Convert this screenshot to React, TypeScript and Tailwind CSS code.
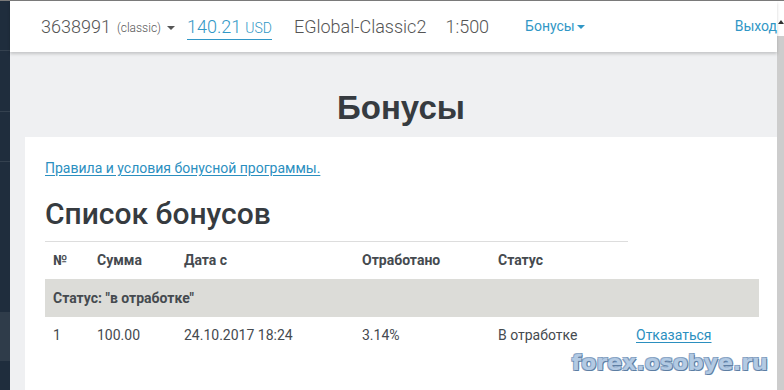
import React from "react";

const Caret = ({ className = "" }: { className?: string }) => (
  <span
    className={`inline-block w-0 h-0 border-l-[4px] border-r-[4px] border-t-[4px] border-l-transparent border-r-transparent ${className}`}
  />
);

export default function App() {
  const cols = "grid grid-cols-[52px_87px_178px_136px_138px_1fr]";
  return (
    <div className="w-[784px] h-[390px] overflow-hidden flex bg-[#eff0f2] font-['Roboto',sans-serif] border-t border-[#7a7a7a]">
      {/* sidebar */}
      <div className="w-[10px] shrink-0 bg-[#1f2d3d] flex flex-col">
        <div className="h-[50px] border-b border-[#34414f]" />
        <div className="h-[61px] border-b border-[#34414f]" />
        <div className="h-[50px] border-b border-[#34414f]" />
        <div className="h-[150px]" />
        <div className="h-[49px] bg-[#2f3c4a]" />
      </div>

      {/* main */}
      <div className="flex-1 flex flex-col min-w-0">
        <div className="h-[51px] bg-white shadow-[0_2px_3px_rgba(0,0,0,0.18)] flex items-center pl-[31px] text-[#555] relative z-10 shrink-0">
          <span className="text-[18px] font-light">3638991</span>
          <span className="text-[12px] font-light ml-[6px] mt-[3px]">(classic)</span>
          <Caret className="ml-[6px] border-t-[#555] mt-[2px]" />
          <span className="ml-[12px] border-b border-[#3197c6] text-[#3197c6] leading-[22px] mt-[2px]">
            <span className="text-[18px] font-light">140.21</span>
            <span className="text-[14px] font-light ml-[4px]">USD</span>
          </span>
          <span className="ml-[22px] text-[18px] font-light">EGlobal-Classic2</span>
          <span className="ml-[19px] text-[18px] font-light">1:500</span>
          <span className="ml-[36px] text-[14px] text-[#3197c6] flex items-center">
            Бонусы
            <Caret className="ml-[2px] border-t-[#3197c6]" />
          </span>
          <span className="ml-auto text-[14px] text-[#3197c6]">Выход</span>
        </div>

        <div className="flex-1 flex flex-col pt-[37px] min-h-0">
          <h1 className="text-center font-['Liberation_Sans',Arial,sans-serif] font-bold text-[33px] leading-[38px] text-[#363b40] h-[48px] pl-[15px]">
            Бонусы
          </h1>
          <div className="flex-1 bg-white ml-[15px] px-[20px] pt-[19px]">
            <a className="text-[14px] text-[#2b8fbf] underline underline-offset-2 leading-[20px]">
              Правила и условия бонусной программы.
            </a>
            <h2 className="text-[30px] font-medium text-[#363b40] mt-[14px] leading-[40px]">
              Список бонусов
            </h2>
            <div className="w-[583px] border-t border-[#dddddd] mt-[7px]" />
            <div className="w-[714px] text-[14px] text-[#454a4f]">
              <div className={`${cols} h-[37px] items-center font-bold`}>
                <div className="pl-[8px]">№</div>
                <div>Сумма</div>
                <div>Дата с</div>
                <div>Отработано</div>
                <div>Статус</div>
                <div />
              </div>
              <div className="h-[38px] bg-[#dcdcd8] flex items-center pl-[8px] font-bold">
                Статус: "в отработке"
              </div>
              <div className={`${cols} h-[36px] items-center`}>
                <div className="pl-[8px]">1</div>
                <div>100.00</div>
                <div>24.10.2017 18:24</div>
                <div>3.14%</div>
                <div>В отработке</div>
                <div>
                  <a className="text-[#2b8fbf] underline underline-offset-2">Отказаться</a>
                </div>
              </div>
            </div>
            <div className="w-[714px] flex justify-end">
              <span className="text-[22px] font-bold font-['DejaVu_Sans',Verdana,sans-serif] text-[#b3cae3] leading-[24px] mr-[-9px] mt-[-2px] [text-shadow:1px_1px_0_#5d7ea3,-1px_-1px_0_#8ea9c8,1px_-1px_0_#7e9bbd,-1px_1px_0_#7e9bbd]">
                forex.osobye.ru
              </span>
            </div>
          </div>
        </div>
      </div>

      {/* scrollbar */}
      <div className="w-[7px] shrink-0 flex flex-col">
        <div className="h-[35px] bg-white flex items-start justify-center pt-[19px]">
          <span className="w-0 h-0 border-l-[3px] border-r-[3px] border-b-[4px] border-l-transparent border-r-transparent border-b-[#333]" />
        </div>
        <div className="flex-1 bg-[#cdcdcd]" />
      </div>
    </div>
  );
}
